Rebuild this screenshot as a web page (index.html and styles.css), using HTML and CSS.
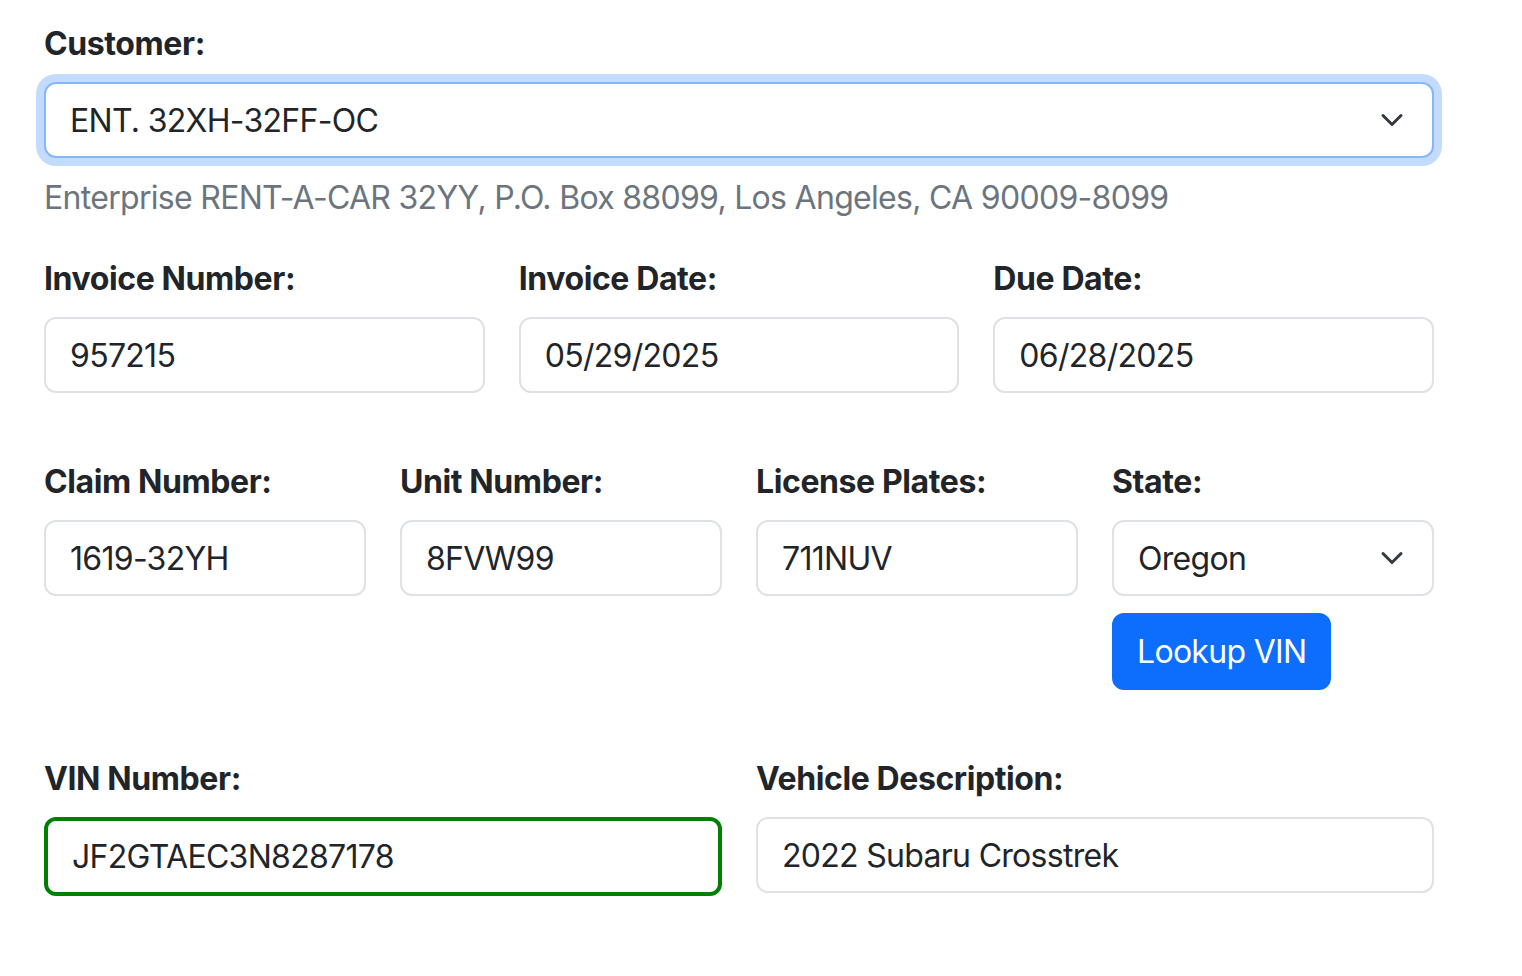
FILE: index.html
```html
<!DOCTYPE html>
<html lang="en">
  <head>
    <meta charset="UTF-8" />
    <meta name="viewport" content="width=device-width, initial-scale=1.0" />
    <title>Invoice</title>
    <link rel="stylesheet" href="styles.css">
  </head>
  <body>
    <form class="invoice-form">
      <div class="field">
        <label class="form-label" for="customer">Customer:</label>
        <div class="select-wrap">
          <select class="form-select form-select--focus" id="customer">
            <option>ENT. 32XH-32FF-OC</option>
          </select>
          <svg class="chevron" viewBox="0 0 16 16" width="24" height="24">
            <path d="m2 5 6 6 6-6" fill="none" stroke="#343a40" stroke-width="2" stroke-linecap="round" stroke-linejoin="round" />
          </svg>
        </div>
        <p class="form-text">Enterprise RENT-A-CAR 32YY, P.O. Box 88099, Los Angeles, CA 90009-8099</p>
      </div>

      <div class="row row--3">
        <div class="field">
          <label class="form-label">Invoice Number:</label>
          <input class="form-control" type="text" value="957215" />
        </div>
        <div class="field">
          <label class="form-label">Invoice Date:</label>
          <input class="form-control" type="text" value="05/29/2025" />
        </div>
        <div class="field">
          <label class="form-label">Due Date:</label>
          <input class="form-control" type="text" value="06/28/2025" />
        </div>
      </div>

      <div class="row row--4">
        <div class="field">
          <label class="form-label">Claim Number:</label>
          <input class="form-control" type="text" value="1619-32YH" />
        </div>
        <div class="field">
          <label class="form-label">Unit Number:</label>
          <input class="form-control" type="text" value="8FVW99" />
        </div>
        <div class="field">
          <label class="form-label">License Plates:</label>
          <input class="form-control" type="text" value="711NUV" />
        </div>
        <div class="field">
          <label class="form-label">State:</label>
          <div class="select-wrap">
            <select class="form-select">
              <option>Oregon</option>
            </select>
            <svg class="chevron" viewBox="0 0 16 16" width="24" height="24">
              <path d="m2 5 6 6 6-6" fill="none" stroke="#343a40" stroke-width="2" stroke-linecap="round" stroke-linejoin="round" />
            </svg>
          </div>
          <div>
            <button type="button" class="btn-primary">Lookup VIN</button>
          </div>
        </div>
      </div>

      <div class="row row--2">
        <div class="field">
          <label class="form-label">VIN Number:</label>
          <input class="form-control form-control--valid" type="text" value="JF2GTAEC3N8287178" />
        </div>
        <div class="field">
          <label class="form-label">Vehicle Description:</label>
          <input class="form-control" type="text" value="2022 Subaru Crosstrek" />
        </div>
      </div>
    </form>
  </body>
</html>
```

FILE: styles.css
```css
body {
  margin: 0;
  padding: 0;
  font-family: Inter, "Noto Sans", sans-serif;
  color: #212529;
  background: #ffffff;
}

.invoice-form {
  width: 1390px;
  padding: 18px 0 0 44px;
}

.field {
  display: flex;
  flex-direction: column;
}

.form-label {
  padding-top: 2px;
  margin-bottom: 14px;
  font-size: 32px;
  line-height: 48px;
  font-weight: 700;
  letter-spacing: -0.4px;
}

.form-control,
.form-select {
  box-sizing: border-box;
  width: 100%;
  height: 76px;
  padding: 0 24px;
  font-family: inherit;
  font-size: 32px;
  letter-spacing: -0.7px;
  color: #212529;
  background: #fff;
  border: 2px solid #dee2e6;
  border-radius: 12px;
  outline: none;
}

.form-select {
  appearance: none;
  -webkit-appearance: none;
  padding-right: 72px;
}

.form-select--focus {
  border-color: #86b7fe;
  box-shadow: 0 0 0 8px rgba(13, 110, 253, 0.25);
}

.form-control--valid {
  height: 79px;
  border: 4px solid #008000;
}

.select-wrap {
  position: relative;
}

.chevron {
  position: absolute;
  right: 30px;
  top: 50%;
  margin-top: -12px;
  pointer-events: none;
}

.form-text {
  margin: 16px 0 0 0;
  font-size: 32px;
  line-height: 48px;
  letter-spacing: -0.7px;
  color: #6c757d;
}

.row {
  display: grid;
  gap: 34px;
}

.row--3 {
  grid-template-columns: repeat(3, 1fr);
  margin-top: 31px;
}

.row--4 {
  grid-template-columns: repeat(4, 1fr);
  margin-top: 63px;
}

.row--2 {
  grid-template-columns: repeat(2, 1fr);
  margin-top: 63px;
}

.btn-primary {
  margin-top: 17px;
  padding: 13px 23px 12px;
  font-family: inherit;
  font-size: 32px;
  line-height: 48px;
  letter-spacing: -0.7px;
  color: #fff;
  background: #0d6efd;
  border: 2px solid #0d6efd;
  border-radius: 12px;
}
```
